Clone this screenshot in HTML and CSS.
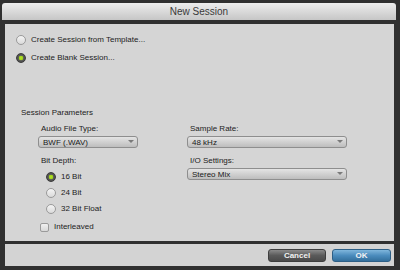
FILE: index.html
```html
<!DOCTYPE html>
<html lang="en">
<head>
    <meta charset="UTF-8">
    <title>New Session</title>
    <link rel="stylesheet" href="styles.css">
</head>
<body>

<div class="window">
    <div class="titlebar">New Session</div>

    <div class="panel">
        <label class="option">
            <span class="radio"></span>
            <span>Create Session from Template...</span>
        </label>
        <label class="option">
            <span class="radio checked"></span>
            <span>Create Blank Session...</span>
        </label>

        <div class="params">
            <div class="heading">Session Parameters</div>
            <div class="columns">
                <div class="column">
                    <div class="field-label">Audio File Type:</div>
                    <div class="select select-short">BWF (.WAV)<span class="arrow"></span></div>

                    <div class="field-label gap">Bit Depth:</div>
                    <div class="bit-list">
                        <label class="option"><span class="radio checked"></span><span>16 Bit</span></label>
                        <label class="option"><span class="radio"></span><span>24 Bit</span></label>
                        <label class="option"><span class="radio"></span><span>32 Bit Float</span></label>
                    </div>

                    <label class="option check-row">
                        <span class="checkbox"></span>
                        <span>Interleaved</span>
                    </label>
                </div>
                <div class="column">
                    <div class="field-label">Sample Rate:</div>
                    <div class="select select-long">48 kHz<span class="arrow"></span></div>

                    <div class="field-label gap">I/O Settings:</div>
                    <div class="select select-long">Stereo Mix<span class="arrow"></span></div>
                </div>
            </div>
        </div>
    </div>

    <div class="footer">
        <button class="btn btn-cancel">Cancel</button>
        <button class="btn btn-ok">OK</button>
    </div>
</div>

</body>
</html>
```

FILE: styles.css
```css
body {
    margin: 0;
    padding: 0;
    background-color: #303030;
    font-family: "Liberation Sans", Arial, sans-serif;
    font-size: 8px;
    color: #222;
}

.window {
    width: 400px;
    height: 270px;
    padding-top: 3px;
    box-sizing: border-box;
}

.titlebar {
    margin: 0 4px 0 2px;
    height: 17px;
    line-height: 17px;
    text-align: center;
    font-size: 10px;
    color: #3a3a3a;
    background: linear-gradient(#ededed, #c6c6c6);
    border-radius: 3px 3px 0 0;
}

.panel {
    margin: 4px 6px 0 5px;
    height: 217px;
    padding: 10px 0 0 11px;
    box-sizing: border-box;
    background-color: #d5d5d5;
}

.option {
    display: flex;
    align-items: center;
    height: 12px;
    margin-bottom: 6px;
    line-height: 10px;
}

.radio {
    width: 10px;
    height: 10px;
    box-sizing: border-box;
    border: 1px solid #9a9a9a;
    border-radius: 50%;
    background: linear-gradient(#f4f4f4, #dadada);
    margin-right: 5px;
}

.radio.checked {
    border-color: #3c3c3c;
    background: radial-gradient(circle, #b4e62a 0, #9fd01a 2px, #5a5a5a 2.6px, #474747 5px);
}

/* sibling margins collapse, so this is the whole gap below the radios */
.params {
    margin-top: 44px;
}

.heading {
    line-height: 10px;
    margin-left: 5px;
}

.columns {
    display: grid;
    grid-template-columns: 149px 160px;
    margin: 6px 0 0 22px;
}

.field-label {
    line-height: 10px;
    padding-left: 3px;
    margin-bottom: 2px;
}

.field-label.gap {
    margin-top: 8px;
}

.select {
    position: relative;
    height: 12px;
    line-height: 11px;
    box-sizing: border-box;
    padding-left: 4px;
    border: 1px solid #8e8e8e;
    border-radius: 3px;
    background: linear-gradient(#e4e4e4, #bdbdbd);
    color: #1a1a1a;
}

.select-short {
    width: 100px;
}

.select-long {
    width: 160px;
}

.arrow {
    position: absolute;
    right: 3px;
    top: 3px;
    border-left: 3px solid transparent;
    border-right: 3px solid transparent;
    border-top: 3px solid #7a7a7a;
}

.bit-list {
    margin-top: 5px;
    padding-left: 8px;
}

.bit-list .option {
    margin-bottom: 4px;
}

.check-row {
    margin-top: 6px;
    padding-left: 2px;
}

.checkbox {
    width: 9px;
    height: 9px;
    box-sizing: border-box;
    border: 1px solid #9a9a9a;
    border-radius: 2px;
    background: linear-gradient(#f0f0f0, #d8d8d8);
    margin-right: 5px;
}

.footer {
    margin: 3px 6px 0 5px;
    height: 22px;
    padding: 5px 3px 0 0;
    box-sizing: border-box;
    background-color: #d3d3d3;
    display: flex;
    justify-content: flex-end;
    gap: 6px;
}

.btn {
    height: 13px;
    padding: 0;
    font-family: "Liberation Sans", Arial, sans-serif;
    font-size: 8px;
    font-weight: bold;
    color: #f2f2f2;
    border-radius: 3px;
    line-height: 11px;
}

.btn-cancel {
    width: 58px;
    border: 1px solid #3e3e3e;
    background: linear-gradient(#8a8a8a, #5a5a5a 50%, #4a4a4a);
}

.btn-ok {
    width: 59px;
    border: 1px solid #2d5f86;
    background: linear-gradient(#7fb6dc, #4b8cbd 50%, #336f9c);
}
```
